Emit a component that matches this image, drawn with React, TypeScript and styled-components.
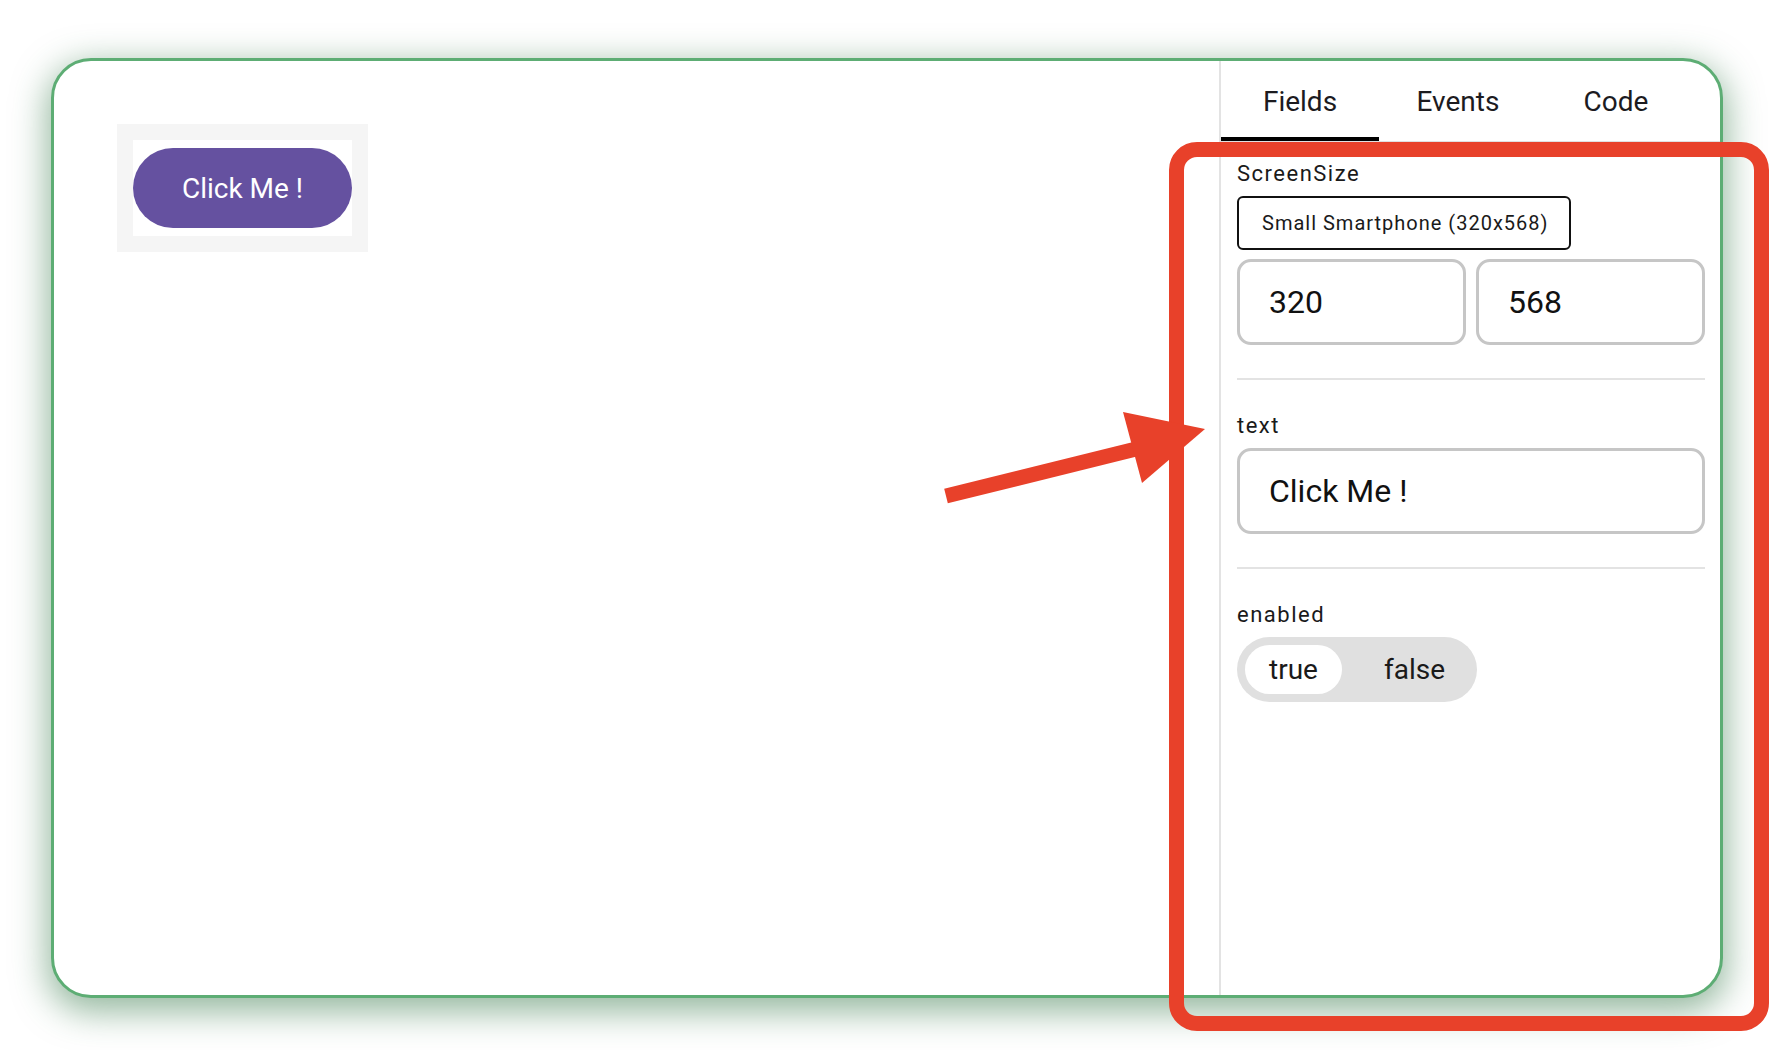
import React, { useState } from 'react';
import styled, { createGlobalStyle } from 'styled-components';

const GlobalStyle = createGlobalStyle`
  * {
    margin: 0;
    padding: 0;
    box-sizing: border-box;
  }
  html, body {
    width: 100%;
    height: 100%;
    background-color: #ffffff;
    font-family: Roboto, 'Liberation Sans', Arial, sans-serif;
  }
`;

const Page = styled.div`
  position: relative;
  width: 1776px;
  height: 1050px;
  padding: 58px 0 0 51px;
  background: #ffffff;
  overflow: hidden;
`;

const Card = styled.div`
  display: flex;
  width: 1672px;
  height: 940px;
  background: #ffffff;
  border: 3px solid #5dad74;
  border-radius: 40px;
  box-shadow: 0 10px 34px 4px rgba(45, 115, 65, 0.5);
  overflow: hidden;
`;

const Canvas = styled.div`
  flex: 1;
  display: flex;
  align-items: flex-start;
  padding: 63px 0 0 63px;
`;

const Preview = styled.div`
  background: #f5f5f5;
  padding: 16px;
`;

const Frame = styled.div`
  background: #ffffff;
  padding: 8px 0;
`;

const PrimaryButton = styled.button`
  width: 219px;
  height: 80px;
  border: none;
  border-radius: 40px;
  background: #6551a0;
  color: #ffffff;
  font-family: Roboto, sans-serif;
  font-size: 28px;
  cursor: pointer;
`;

const Panel = styled.aside`
  width: 501px;
  border-left: 2px solid #e3e3e3;
  display: flex;
  flex-direction: column;
`;

const TabBar = styled.div`
  display: flex;
  height: 82px;
  border-bottom: 2px solid #e0e0e0;
`;

const Tab = styled.button<{ $active?: boolean }>`
  width: 158px;
  height: 100%;
  border: none;
  background: transparent;
  font-family: Roboto, sans-serif;
  font-size: 28px;
  color: #1c1b1f;
  padding-top: 5px;
  border-bottom: 4px solid ${p => (p.$active ? '#000000' : 'transparent')};
  cursor: pointer;
`;

const Fields = styled.div`
  padding: 18px 15px 0 16px;
`;

const Section = styled.div<{ $first?: boolean; $last?: boolean }>`
  display: flex;
  flex-direction: column;
  align-items: flex-start;
  padding: ${p => (p.$first ? '0' : '33px')} 0 ${p => (p.$last ? '0' : '33px')};
  border-bottom: ${p => (p.$last ? 'none' : '2px solid #e3e3e3')};
`;

const Label = styled.div`
  font-size: 22px;
  line-height: 26px;
  letter-spacing: 1.5px;
  color: #1a1a1a;
  margin-bottom: 9px;
`;

const SelectBox = styled.div`
  width: 334px;
  height: 54px;
  display: flex;
  align-items: center;
  padding-left: 23px;
  border: 2px solid #111111;
  border-radius: 6px;
  font-size: 20px;
  letter-spacing: 1px;
  color: #1a1a1a;
`;

const SizeRow = styled.div`
  width: 100%;
  display: grid;
  grid-template-columns: 1fr 1fr;
  gap: 10px;
  margin-top: 9px;
`;

const TextInput = styled.input`
  width: 100%;
  height: 86px;
  padding: 0 29px;
  border: 3px solid #c6c6c6;
  border-radius: 14px;
  font-family: Roboto, sans-serif;
  font-size: 32px;
  color: #111111;
  outline: none;
  background: #ffffff;
`;

const Toggle = styled.div`
  display: inline-flex;
  gap: 18px;
  padding: 8px;
  background: #e0e0e0;
  border-radius: 33px;
`;

const ToggleOption = styled.button<{ $selected?: boolean }>`
  height: 49px;
  padding: 0 24px;
  border: none;
  border-radius: 25px;
  background: ${p => (p.$selected ? '#ffffff' : 'transparent')};
  font-family: Roboto, sans-serif;
  font-size: 28px;
  color: #1a1a1a;
  cursor: pointer;
`;

const Highlight = styled.div`
  position: absolute;
  left: 1169px;
  top: 142px;
  width: 600px;
  height: 889px;
  border: 15px solid #e8412a;
  border-radius: 28px;
  pointer-events: none;
`;

const Overlay = styled.svg`
  position: absolute;
  left: 0;
  top: 0;
  pointer-events: none;
`;

export default function App() {
  const [tab, setTab] = useState('Fields');
  const [enabled, setEnabled] = useState(true);
  const [text, setText] = useState('Click Me !');
  const [width, setWidth] = useState('320');
  const [height, setHeight] = useState('568');

  return (
    <>
      <GlobalStyle />
      <Page>
        <Card>
          <Canvas>
            <Preview>
              <Frame>
                <PrimaryButton>{text}</PrimaryButton>
              </Frame>
            </Preview>
          </Canvas>
          <Panel>
            <TabBar>
              {['Fields', 'Events', 'Code'].map(t => (
                <Tab key={t} $active={tab === t} onClick={() => setTab(t)}>
                  {t}
                </Tab>
              ))}
            </TabBar>
            <Fields>
              <Section $first>
                <Label>ScreenSize</Label>
                <SelectBox>Small Smartphone (320x568)</SelectBox>
                <SizeRow>
                  <TextInput value={width} onChange={e => setWidth(e.target.value)} />
                  <TextInput value={height} onChange={e => setHeight(e.target.value)} />
                </SizeRow>
              </Section>
              <Section>
                <Label>text</Label>
                <TextInput value={text} onChange={e => setText(e.target.value)} />
              </Section>
              <Section $last>
                <Label>enabled</Label>
                <Toggle>
                  <ToggleOption $selected={enabled} onClick={() => setEnabled(true)}>true</ToggleOption>
                  <ToggleOption $selected={!enabled} onClick={() => setEnabled(false)}>false</ToggleOption>
                </Toggle>
              </Section>
            </Fields>
          </Panel>
        </Card>
        <Highlight />
        <Overlay width="1776" height="1050" viewBox="0 0 1776 1050">
          <line x1="946" y1="496" x2="1136" y2="449" stroke="#e8412a" strokeWidth="15" />
          <polygon points="1123,412 1205,429 1142,483" fill="#e8412a" />
        </Overlay>
      </Page>
    </>
  );
}
